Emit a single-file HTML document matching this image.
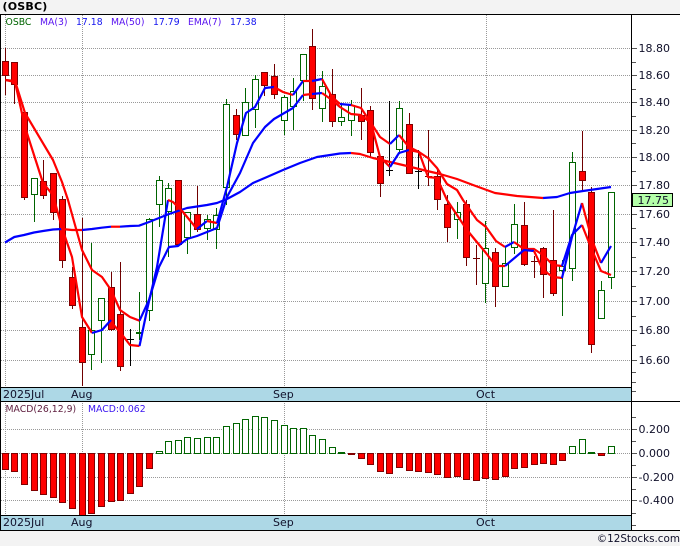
<!DOCTYPE html>
<html><head><meta charset="utf-8"><style>
html,body{margin:0;padding:0;background:#f3f3f3;width:680px;height:546px;overflow:hidden}
svg{display:block}
text{font-family:"DejaVu Sans","Liberation Sans",sans-serif;font-size:11px;fill:#10102a}
.c{shape-rendering:crispEdges}
.l{fill:none;stroke-width:2.2;stroke-linejoin:round;stroke-linecap:butt}
.r{stroke:#f00}.b{stroke:#00f}
.s{font-size:9.300px}
</style></head><body>
<svg width="680" height="546" viewBox="0 0 680 546" xmlns="http://www.w3.org/2000/svg">
<rect x="0" y="14" width="680" height="517" fill="#fff"/>
<g class="c" fill="none">
<path stroke="#999" stroke-dasharray="1 1" d="M1 48.5H632M1 75.5H632M1 102.5H632M1 130.5H632M1 157.5H632M1 185.5H632M1 214.5H632M1 242.5H632M1 271.5H632M1 301.5H632M1 330.5H632M1 360.5H632M1 429.5H632M1 453.5H632M1 477.5H632M1 500.5H632M5.5 15V515M82.5 15V515M284.5 15V515M486.5 15V515"/>
<!-- wicks -->
<path stroke="#700000" d="M5.5 48V95M14.5 62V104M24.5 112V200M43.5 160V199M53.5 173V220M62.5 196V268M72.5 267V309M82.5 218V386M111.5 272V331M120.5 262V371M178.5 180V245M197.5 186V232M236.5 109V140M264.5 72V96M274.5 64V99M312.5 29V110M332.5 69V127M361.5 88V140M370.5 106V157M380.5 156V197M409.5 113V174M428.5 130V186M437.5 168V210M447.5 195V242M466.5 200V266M476.5 245V285M495.5 248V307M524.5 202V266M534.5 256V278M543.5 247V298M553.5 210V296M582.5 131V192M591.5 187V353"/>
<path stroke="#006400" d="M34.5 178V222M91.5 243V370M101.5 298V363M139.5 292V340M149.5 218V321M159.5 176V227M168.5 183V257M187.5 212V254M207.5 215V240M216.5 208V249M226.5 99V205M245.5 88V135M255.5 75V128M284.5 95V135M293.5 78V130M303.5 54V101M322.5 71V122M341.5 105V126M351.5 100V136M399.5 101V154M457.5 202V239M485.5 221V303M505.5 247V287M514.5 204V254M562.5 260V316M572.5 152V281M601.5 281V318M611.5 192V289"/>
<path stroke="#000" d="M130.5 329V366M389.5 101V176M418.5 150V189M127 339.5H134M386 170.5H393M415 171.5H422"/>
<path stroke="#700000" d="M425 176.5H432M473 258.5H480M531 261.5H538"/>
<path stroke="#006400" stroke-width="2" d="M136 333H143"/>
<!-- green bodies -->
<path fill="#fff" stroke="#006400" d="M31.5 178.5h6V194.500h-6zM88.500 330.500h6V354.500h-6zM98.500 298.500h6V320.500h-6zM146.500 219.500h6V310.500h-6zM156.500 180.500h6V204.500h-6zM165.500 188.500h6V211.500h-6zM184.500 212.500h6V237.500h-6zM204.500 219.500h6V228.500h-6zM213.500 215.500h6V229.500h-6zM223.500 104.500h6V187.500h-6zM242.500 102.500h6V135.500h-6zM252.500 79.500h6V109.500h-6zM281.500 97.500h6V120.500h-6zM290.500 91.500h6V106.500h-6zM300.500 54.500h6V80.500h-6zM319.500 86.500h6V108.500h-6zM338.500 117.500h6V121.500h-6zM348.500 105.500h6V120.500h-6zM396.500 108.500h6V149.500h-6zM454.500 212.500h6V219.500h-6zM482.500 248.500h6V283.500h-6zM502.500 263.500h6V286.500h-6zM511.500 224.500h6V247.500h-6zM559.500 266.500h6V270.500h-6zM569.500 162.500h6V268.500h-6zM598.500 290.500h6V318.500h-6zM608.500 192.500h6V277.500h-6z"/>
<!-- red bodies -->
<path fill="#f00" stroke="#800000" d="M2.500 61.500h6V75.500h-6zM11.500 62.500h6V84.500h-6zM21.500 112.500h6V197.500h-6zM40.500 181.500h6V195.500h-6zM50.500 173.500h6V212.500h-6zM59.500 199.500h6V260.500h-6zM69.500 277.500h6V305.500h-6zM79.500 327.500h6V362.500h-6zM108.500 287.500h6V329.500h-6zM117.500 314.500h6V366.500h-6zM175.500 180.500h6V244.500h-6zM194.500 214.500h6V229.500h-6zM233.500 115.500h6V134.500h-6zM261.500 72.500h6V85.500h-6zM271.500 76.500h6V94.500h-6zM309.500 46.500h6V98.500h-6zM329.500 94.500h6V121.500h-6zM358.500 115.500h6V121.500h-6zM367.500 110.500h6V152.500h-6zM377.500 156.500h6V183.500h-6zM406.500 124.500h6V173.500h-6zM434.500 176.500h6V199.500h-6zM444.500 204.500h6V227.500h-6zM463.500 204.500h6V257.500h-6zM492.500 252.500h6V286.500h-6zM521.500 225.500h6V264.500h-6zM540.500 248.500h6V274.500h-6zM550.500 260.500h6V293.500h-6zM579.500 171.500h6V180.500h-6zM588.500 192.500h6V344.500h-6z"/>
</g>
<!-- MA50 -->
<polyline class="l b" points="5,242.500 14.300,237 24,235 34,232.500 43,231 53,229.500 62,229"/>
<polyline class="l r" points="62,229 72,230 82,230"/>
<polyline class="l b" points="82,230 92,229 101.700,227.700 111,226.700"/>
<polyline class="l r" points="111,226.700 120,226.700"/>
<polyline class="l b" points="120,226.700 130,226 139,225.700 149,222 159,218 169,214 178,211 187,208 197,206.500 207,205 217,203 227,199 240,192 253,183 267,177 283,170 300,163 317,157 340,153.500 351,153"/>
<polyline class="l r" points="351,153 360,154 373,158 390,162 407,166 423,170 440,174 457,179 473,185 495,193 517,196 543,198"/>
<polyline class="l b" points="543,198 557,197 570,193 583,191 597,189 611,187"/>
<!-- EMA7 -->
<polyline class="l r" points="5.500,80 15,81 25,113 53,160 62,182 68,200 82,250 92,270 102,277 111,290 120,310 130,317 139.500,320.700"/>
<polyline class="l b" points="139.500,320.700 149,300 159,267 169,247 178,246 187,239 197,236 207,232 217,228 227,197 240,173 253,143 265,127 274,119 293,108 303,95"/>
<polyline class="l r" points="303,95 312,94"/>
<polyline class="l b" points="312,94 322,93"/>
<polyline class="l r" points="322,93 332,100 340,107 351,114 361,115 371,123 380,157 390,167"/>
<polyline class="l b" points="390,167 399,153 409,150"/>
<polyline class="l r" points="409,150 419,152 428,158 437,168 447,184 457,190 463,200 477,220 486,227 496,241 505,247"/>
<polyline class="l b" points="505,247 514,242"/>
<polyline class="l r" points="514,242 524,249 534,249 543,255 553,265 562,266"/>
<polyline class="l b" points="562,266 572,235 582,225"/>
<polyline class="l r" points="582,225 592,250 601,271 611,275"/>
<!-- MA3 -->
<polyline class="l r" points="5.500,80 15,82 25,127 43,183 53,195 62,228 72,257 82,317 92,333"/>
<polyline class="l b" points="92,333 102,330 111,320"/>
<polyline class="l r" points="111,322 120,332 130,345 139.500,346"/>
<polyline class="l b" points="139.500,346 147,310 157,267 168,200"/>
<polyline class="l r" points="168,200 173,202 183,212 197,229"/>
<polyline class="l b" points="197,229 207,221"/>
<polyline class="l r" points="207,221 217,223"/>
<polyline class="l b" points="217,223 227,187 237,143 246,113 255,107 265,88 274,87"/>
<polyline class="l r" points="274,87 283,92 293,95"/>
<polyline class="l b" points="293,95 303,81"/>
<polyline class="l r" points="303,81 312,81"/>
<polyline class="l b" points="312,81 322,79"/>
<polyline class="l r" points="322,79 332,97 340,104"/>
<polyline class="l b" points="340,104 351,105"/>
<polyline class="l r" points="351,105 361,108 371,123 380,137 390,144"/>
<polyline class="l b" points="390,144 399,135"/>
<polyline class="l r" points="399,135 409,147 419,152 428,177 437,178 447,200 467,230 476,241 486,253 496,266 505,266"/>
<polyline class="l b" points="505,266 524,250 534,251"/>
<polyline class="l r" points="534,251 543,270 553,277 562,278"/>
<polyline class="l b" points="562,278 572,237 582,203"/>
<polyline class="l r" points="582,203 592,240 601,263"/>
<polyline class="l b" points="601,263 611,246"/>
<!-- MACD -->
<g class="c">
<path fill="#f00" stroke="#800000" d="M2.500 453.500h6V469.500h-6zM11.500 453.500h6V471.500h-6zM21.500 453.500h6V484.500h-6zM31.500 453.500h6V490.500h-6zM40.500 453.500h6V494.500h-6zM50.500 453.500h6V497.500h-6zM59.500 453.500h6V502.500h-6zM69.500 453.500h6V508.500h-6zM79.500 453.500h6V515.500h-6zM88.500 453.500h6V513.500h-6zM98.500 453.500h6V506.500h-6zM108.500 453.500h6V501.500h-6zM117.500 453.500h6V500.500h-6zM127.500 453.500h6V493.500h-6zM136.500 453.500h6V486.500h-6zM146.500 453.500h6V468.500h-6zM348.500 453.500h6V454.500h-6zM358.500 453.500h6V458.500h-6zM367.500 453.500h6V464.500h-6zM377.500 453.500h6V471.500h-6zM386.500 453.500h6V473.500h-6zM396.500 453.500h6V467.500h-6zM406.500 453.500h6V470.500h-6zM415.500 453.500h6V471.500h-6zM425.500 453.500h6V472.500h-6zM434.500 453.500h6V474.500h-6zM444.500 453.500h6V477.500h-6zM454.500 453.500h6V476.500h-6zM463.500 453.500h6V479.500h-6zM473.500 453.500h6V480.500h-6zM482.500 453.500h6V478.500h-6zM492.500 453.500h6V479.500h-6zM502.500 453.500h6V476.500h-6zM511.500 453.500h6V468.500h-6zM521.500 453.500h6V467.500h-6zM531.500 453.500h6V464.500h-6zM540.500 453.500h6V463.500h-6zM550.500 453.500h6V464.500h-6zM559.500 453.500h6V460.500h-6zM598.500 453.500h6V455.500h-6z"/>
<path fill="#fff" stroke="#006400" d="M156.500 451.500h6V453.500h-6zM165.500 441.500h6V453.500h-6zM175.500 440.500h6V453.500h-6zM184.500 437.500h6V453.500h-6zM194.500 438.500h6V453.500h-6zM204.500 437.500h6V453.500h-6zM213.500 437.500h6V453.500h-6zM223.500 426.500h6V453.500h-6zM233.500 423.500h6V453.500h-6zM242.500 419.500h6V453.500h-6zM252.500 416.500h6V453.500h-6zM261.500 417.500h6V453.500h-6zM271.500 420.500h6V453.500h-6zM281.500 425.500h6V453.500h-6zM290.500 428.500h6V453.500h-6zM300.500 428.500h6V453.500h-6zM309.500 435.500h6V453.500h-6zM319.500 439.500h6V453.500h-6zM329.500 447.500h6V453.500h-6zM338.500 452.500h6V453.500h-6zM569.500 446.500h6V453.500h-6zM579.500 439.500h6V453.500h-6zM588.500 452.500h6V453.500h-6zM608.500 446.500h6V453.500h-6z"/>
</g>
<!-- axis bands -->
<g class="c">
<rect x="1" y="388" width="630" height="13" fill="#add8e6"/>
<rect x="1" y="516" width="630" height="14" fill="#add8e6"/>
<path fill="none" stroke="#000" d="M0 14.500H680M0.500 14V531M631.500 14V531M0 387.500H632M0 401.500H680M0 515.500H632M0 530.500H680"/>
<path fill="none" stroke="#555" d="M632 48.500h5M632 75.500h5M632 102.500h5M632 130.500h5M632 157.500h5M632 185.500h5M632 214.500h5M632 242.500h5M632 271.500h5M632 301.500h5M632 330.500h5M632 360.500h5M632 429.500h5M632 453.500h5M632 477.500h5M632 500.500h5M632 62.500h4M632 89.500h4M632 116.500h4M632 143.500h4M632 171.500h4M632 228.500h4M632 257.500h4M632 286.500h4M632 316.500h4M632 345.500h4M632 372.500h4M632 382.500h4M632 391.500h4M632 417.500h4M632 441.500h4M632 465.500h4M632 489.500h4M632 513.500h4M632 525.500h4"/>
<rect x="632.500" y="193.500" width="40" height="13" fill="#b4ffa8" stroke="#000"/>
</g>
<text x="2.500" y="10" style="font-weight:bold;fill:#000;letter-spacing:.2px">(OSBC)</text>
<text class="s" x="5.500" y="25" style="fill:#006400">OSBC</text>
<text class="s" x="40" y="25" style="fill:#5a14f0">MA(3)</text>
<text class="s" x="76" y="25" style="fill:#1414f0">17.18</text>
<text class="s" x="111" y="25" style="fill:#5a14f0">MA(50)</text>
<text class="s" x="153" y="25" style="fill:#1414f0">17.79</text>
<text class="s" x="188" y="25" style="fill:#5a14f0">EMA(7)</text>
<text class="s" x="230" y="25" style="fill:#1414f0">17.38</text>
<text x="638.500" y="52">18.80</text><text x="638.500" y="79">18.60</text><text x="638.500" y="106">18.40</text><text x="638.500" y="134">18.20</text><text x="638.500" y="161">18.00</text><text x="638.500" y="189">17.80</text>
<text x="637.500" y="204">17.75</text>
<text x="638.500" y="218">17.60</text><text x="638.500" y="246">17.40</text><text x="638.500" y="275">17.20</text><text x="638.500" y="305">17.00</text><text x="638.500" y="334">16.80</text><text x="638.500" y="364">16.60</text>
<text x="638.500" y="433">0.200</text><text x="638.500" y="457">0.000</text><text x="638.500" y="481">-0.200</text><text x="638.500" y="504">-0.400</text>
<text x="3" y="398">2025Jul</text><text x="71" y="398">Aug</text><text x="273" y="398">Sep</text><text x="476" y="398">Oct</text>
<text x="3" y="526">2025Jul</text><text x="71" y="526">Aug</text><text x="273" y="526">Sep</text><text x="476" y="526">Oct</text>
<text class="s" x="5.500" y="412" style="fill:#602040">MACD(26,12,9)</text>
<text class="s" x="88" y="412" style="fill:#3a14f0">MACD:0.062</text>
<text x="680" y="542" text-anchor="end" style="font-size:10.400px">©12Stocks.com</text>
</svg>
</body></html>
